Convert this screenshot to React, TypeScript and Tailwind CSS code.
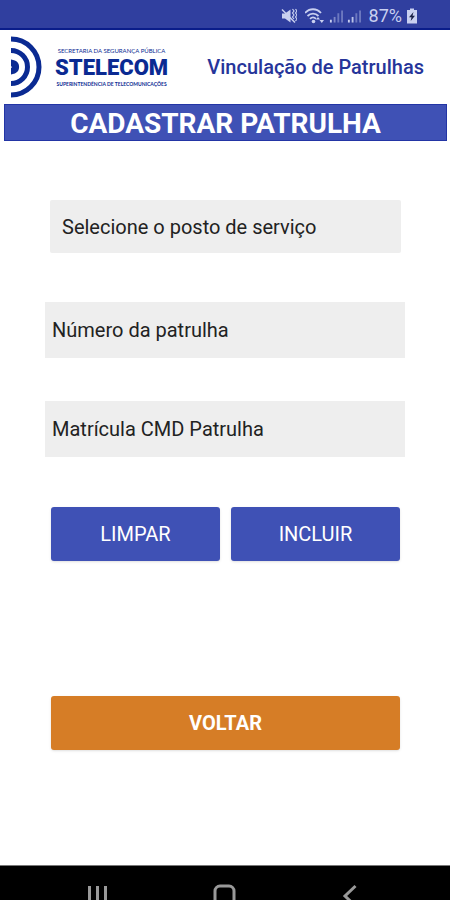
import React, { useState } from 'react';

const postos = ['1º Posto', '2º Posto', '3º Posto'];

const StatusBar: React.FC = () => (
  <div className="flex h-[30px] items-center justify-end gap-1 border-b-2 border-[#0a1d8a] bg-[#303f9f] pt-1 pr-8 text-[#c9d0f0]">
    {/* som desligado */}
    <svg className="h-4 w-4" viewBox="0 0 16 16" fill="none" stroke="currentColor">
      <path d="M1 5.500h3l5.500-4v13l-5.500-4H1z" fill="currentColor" stroke="none" />
      <path d="M1 1.500l13 13" strokeWidth="1.5" />
      <path d="M11.500 1l1.500 2-1.500 2 1.500 2-1.500 2 1.500 2M14.500 1L16 3l-1.500 2L16 7l-1.500 2 1.500 2-1.500 2" strokeWidth="1.200" />
    </svg>
    {/* wi-fi */}
    <svg className="ml-1 h-4 w-5" viewBox="0 0 20 16" fill="none" stroke="currentColor" strokeWidth="1.8">
      <path d="M0 5C4.500 0 11.500 0 16 5M2.500 8c3.200-3.300 7.800-3.300 11 0M5 10.800c2-2 4-2 6 0" />
      <circle cx="8.500" cy="13.500" r="1.800" fill="currentColor" stroke="none" />
      <path d="M11 11.500l2-2.500 2 2.500zM14.500 12H19l-2.200 3z" fill="currentColor" stroke="none" />
    </svg>
    {[0, 1].map(i => (
      <svg key={i} className="h-4 w-[14px]" viewBox="0 0 15 16" fill="currentColor">
        <path d="M1 12h2v3H1z" />
        <path d="M5 9h2v6H5z" opacity={i === 1 ? 0.9 : 0.5} />
        <path d="M9 5h2v10H9zM13 2h2v13h-2z" opacity="0.4" />
      </svg>
    ))}
    <span className="ml-1 text-[18px] leading-5">87%</span>
    <svg className="h-4 w-3" viewBox="0 0 12 16">
      <path d="M4 0.500h4V2h3v13.500H1V2h3z" fill="currentColor" />
      <path d="M7.500 4L3 9.300h2.500L4.700 13 9 7.700H6.500z" fill="#1a2146" />
    </svg>
  </div>
);

const Logo: React.FC = () => (
  <div className="flex items-center gap-3 text-[#0a2a92]">
    <svg className="h-[62px] w-8" viewBox="0 0 32 62" fill="none" stroke="currentColor">
      <path d="M0 24.500l3.500 1a6 6 0 0 1 0 11l-3.500 1v-4l2-2.500-2-2.500z" fill="currentColor" strokeWidth="2" />
      <path d="M0 14.500a16.500 16.500 0 0 1 0 33" strokeWidth="5" />
      <path d="M0 3a28 28 0 0 1 0 56" strokeWidth="5" />
    </svg>
    <div className="text-center font-['Lato',sans-serif] whitespace-nowrap">
      <p className="text-[6px] leading-[8px]">SECRETARIA DA SEGURANÇA PÚBLICA</p>
      <p className="font-['Roboto',sans-serif] text-[22px] leading-[26px] font-black">STELECOM</p>
      <p className="text-[5px] leading-[6px] font-bold">SUPERINTENDÊNCIA DE TELECOMUNICAÇÕES</p>
    </div>
  </div>
);

const NavBar: React.FC = () => (
  <nav className="flex h-[35px] items-start justify-between overflow-hidden border-t border-[#777] bg-black px-[86px] pt-[18px] text-[#999]">
    <button type="button" aria-label="Recentes">
      <svg className="h-6 w-6" viewBox="0 0 24 24" stroke="currentColor" strokeWidth="3">
        <path d="M3.500 2v20M11.500 2v20M19.500 2v20" />
      </svg>
    </button>
    <button type="button" aria-label="Início">
      <svg className="h-6 w-6" viewBox="0 0 24 24" fill="none" stroke="currentColor" strokeWidth="3">
        <rect x="2" y="2" width="19" height="20" rx="5" />
      </svg>
    </button>
    <button type="button" aria-label="Voltar à tela anterior">
      <svg className="h-6 w-6" viewBox="0 0 24 24" fill="none" stroke="currentColor" strokeWidth="3">
        <path d="M15.500 2L5 12l10.500 10" />
      </svg>
    </button>
  </nav>
);

const App: React.FC = () => {
  const [posto, setPosto] = useState('');
  const [numero, setNumero] = useState('');
  const [matricula, setMatricula] = useState('');

  const limpar = () => {
    setPosto('');
    setNumero('');
    setMatricula('');
  };

  return (
    <div className="flex min-h-screen flex-col bg-white font-['Roboto',sans-serif]">
      <StatusBar />

      <header className="flex h-[74px] items-center justify-between pr-[26px] pl-[11px]">
        <Logo />
        <p className="text-[20px] leading-6 font-medium whitespace-nowrap text-[#26359a]">Vinculação de Patrulhas</p>
      </header>

      <h1 className="mr-[3px] ml-1 border border-[#2335a5] bg-[#3f51b5] pt-[2px] text-center text-[28px] leading-[33px] font-bold text-white">
        CADASTRAR PATRULHA
      </h1>

      <form className="flex flex-1 flex-col px-[45px] pt-[59px]" onSubmit={e => e.preventDefault()}>
        <select
          aria-label="Posto de serviço"
          value={posto}
          onChange={e => setPosto(e.target.value)}
          className="mr-1 ml-[5px] h-[53px] appearance-none rounded-xs bg-[#eee] px-3 text-[20px] text-[#222]"
        >
          <option value="">Selecione o posto de serviço</option>
          {postos.map(p => (
            <option key={p}>{p}</option>
          ))}
        </select>

        <input
          aria-label="Número da patrulha"
          placeholder="Número da patrulha"
          value={numero}
          onChange={e => setNumero(e.target.value)}
          className="mt-[49px] h-14 bg-[#eee] px-[7px] text-[20px] text-[#222] placeholder:text-[#222]"
        />
        <input
          aria-label="Matrícula CMD Patrulha"
          placeholder="Matrícula CMD Patrulha"
          value={matricula}
          onChange={e => setMatricula(e.target.value)}
          className="mt-[43px] h-14 bg-[#eee] px-[7px] text-[20px] text-[#222] placeholder:text-[#222]"
        />

        {/* ações */}
        <div className="mr-[5px] ml-[6px] mt-[50px] grid grid-cols-2 gap-[11px] text-[20px] text-white">
          <button type="button" onClick={limpar} className="h-[54px] rounded-[3px] bg-[#3f51b5] shadow-sm">
            LIMPAR
          </button>
          <button type="submit" className="h-[54px] rounded-[3px] bg-[#3f51b5] shadow-sm">
            INCLUIR
          </button>
        </div>

        <button type="button" className="mr-[5px] ml-[6px] mt-[135px] h-[54px] rounded-[3px] bg-[#d67d26] text-[20px] font-bold text-white shadow-sm">
          VOLTAR
        </button>
      </form>

      <NavBar />
    </div>
  );
};

export default App;
